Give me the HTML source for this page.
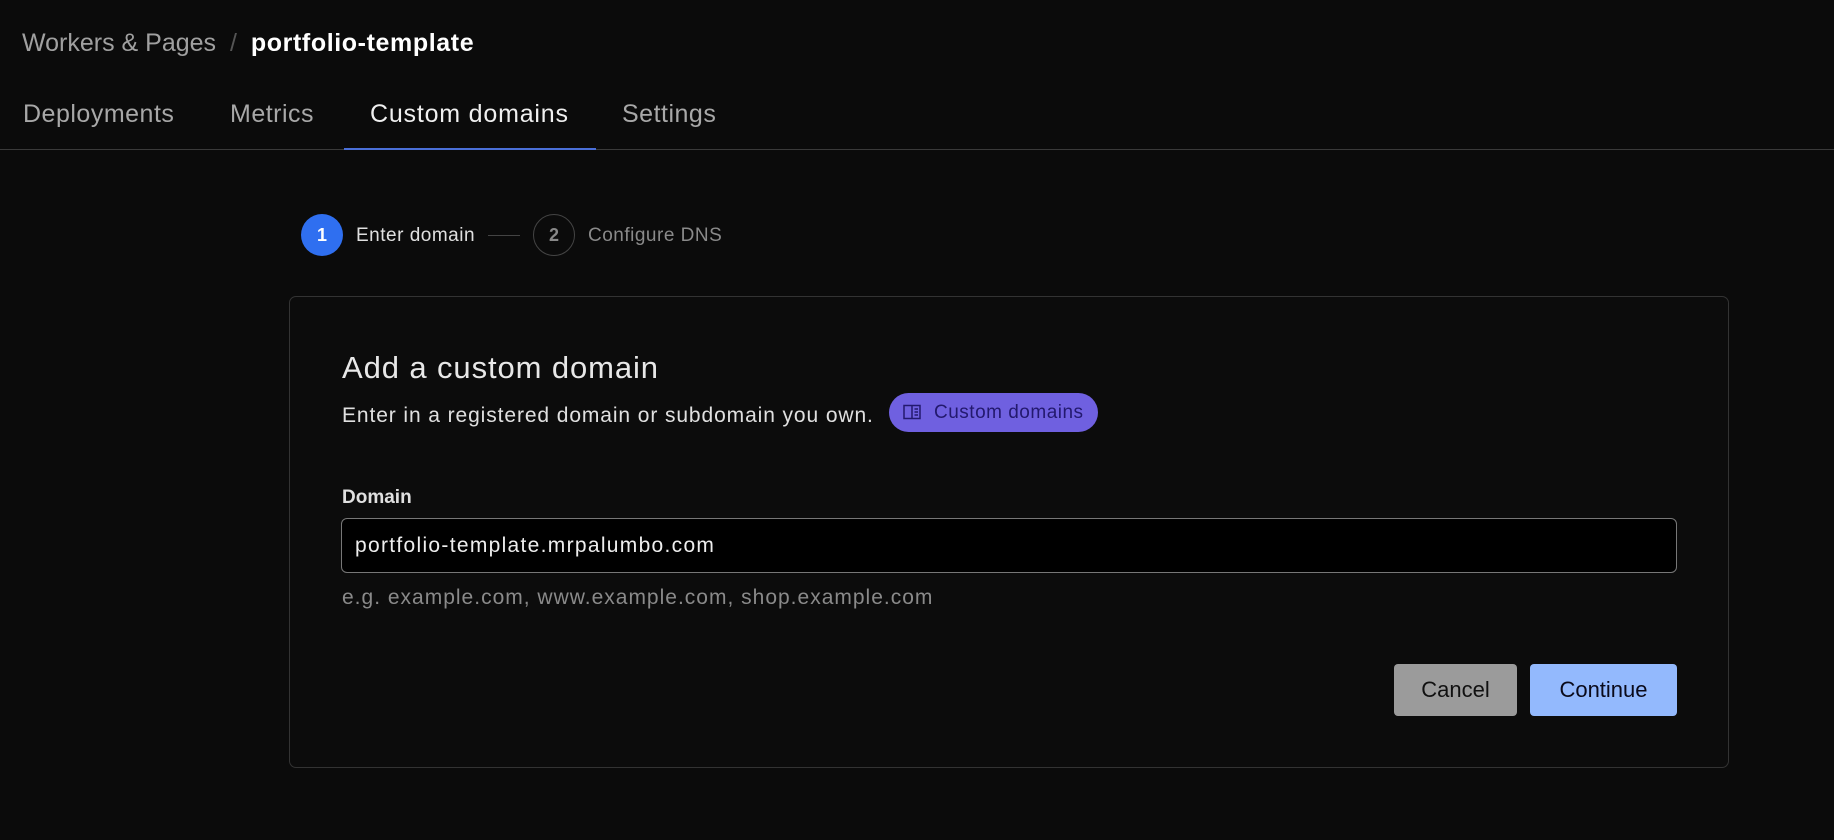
<!DOCTYPE html>
<html><head><meta charset="utf-8"><style>
*{box-sizing:border-box;margin:0;padding:0}
body{width:1834px;height:840px;background:#0b0b0b;font-family:"Liberation Sans",sans-serif;position:relative;overflow:hidden;color:#e6e6e6}
.a{position:absolute;white-space:nowrap}
</style></head><body>
<div class="a" style="left:22px;top:29px;font-size:25px;color:#a0a0a0">Workers &amp; Pages <span style="color:#555;margin:0 7px">/</span> <span style="color:#fff;font-weight:bold;letter-spacing:0.6px">portfolio-template</span></div>
<div class="a" style="left:23px;top:100px;font-size:25px;color:#a8a8a8;letter-spacing:0.5px">Deployments</div>
<div class="a" style="left:230px;top:100px;font-size:25px;color:#a8a8a8;letter-spacing:0.5px">Metrics</div>
<div class="a" style="left:370px;top:100px;font-size:25px;color:#f0f0f0;letter-spacing:0.8px">Custom domains</div>
<div class="a" style="left:622px;top:100px;font-size:25px;color:#a8a8a8;letter-spacing:0.5px">Settings</div>
<div class="a" style="left:0;top:149px;width:1834px;height:1px;background:#3a3a3a"></div>
<div class="a" style="left:344px;top:148px;width:252px;height:2px;background:#4a6fd8"></div>

<div class="a" style="left:301px;top:214px;width:42px;height:42px;border-radius:50%;background:#2f6ff0;color:#fff;font-size:18px;font-weight:bold;text-align:center;line-height:42px">1</div>
<div class="a" style="left:356px;top:225px;font-size:19px;color:#e0e0e0;letter-spacing:0.5px">Enter domain</div>
<div class="a" style="left:488px;top:235px;width:32px;height:1px;background:#444"></div>
<div class="a" style="left:533px;top:214px;width:42px;height:42px;border-radius:50%;border:1px solid #444;color:#888;font-size:18px;font-weight:bold;text-align:center;line-height:40px">2</div>
<div class="a" style="left:588px;top:225px;font-size:19px;color:#8a8a8a;letter-spacing:0.5px">Configure DNS</div>

<div class="a" style="left:289px;top:296px;width:1440px;height:472px;border:1px solid #333;border-radius:7px;background:#0c0c0c"></div>
<div class="a" style="left:342px;top:350px;font-size:31px;color:#e8e8e8;letter-spacing:0.9px">Add a custom domain</div>
<div class="a" style="left:342px;top:404px;font-size:21px;color:#e0e0e0;letter-spacing:0.9px">Enter in a registered domain or subdomain you own.</div>
<div class="a" style="left:889px;top:393px;width:209px;height:39px;border-radius:20px;background:#6f60e0;color:#23196e;font-size:19px;line-height:39px;padding-left:45px;letter-spacing:0.5px">Custom domains</div>
<svg class="a" style="left:903px;top:404px" width="18" height="16" viewBox="0 0 18 16" fill="none" stroke="#23196e" stroke-width="1.5"><rect x="1" y="1.5" width="16" height="13"/><line x1="9" y1="1.5" x2="9" y2="14.5"/><line x1="11.5" y1="5" x2="15" y2="5"/><line x1="11.5" y1="8" x2="15" y2="8"/><line x1="11.5" y1="11" x2="15" y2="11"/></svg>
<div class="a" style="left:342px;top:487px;font-size:19px;font-weight:bold;color:#e0e0e0">Domain</div>
<div class="a" style="left:341px;top:518px;width:1336px;height:55px;border:1px solid #777;border-radius:6px;background:#000;color:#eee;font-size:21px;line-height:53px;padding-left:13px;letter-spacing:1.3px">portfolio-template.mrpalumbo.com</div>
<div class="a" style="left:342px;top:586px;font-size:21px;color:#8a8a8a;letter-spacing:1px">e.g. example.com, www.example.com, shop.example.com</div>
<div class="a" style="left:1394px;top:664px;width:123px;height:52px;border-radius:4px;background:#9b9b9b;color:#111;font-size:22px;line-height:52px;text-align:center">Cancel</div>
<div class="a" style="left:1530px;top:664px;width:147px;height:52px;border-radius:4px;background:#93b9fd;color:#0a0a1a;font-size:22px;line-height:52px;text-align:center">Continue</div>
</body></html>
